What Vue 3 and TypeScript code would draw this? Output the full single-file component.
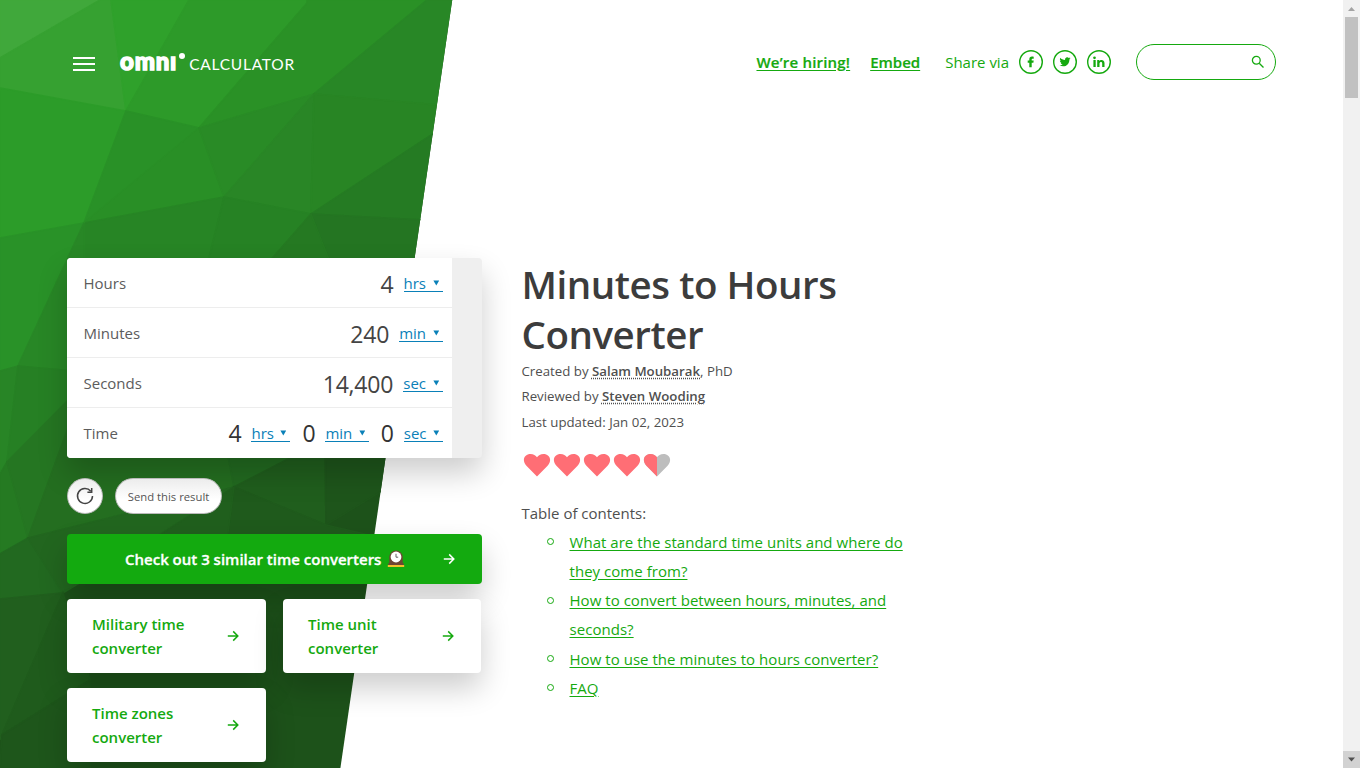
<script setup lang="ts">
interface Facet { points: string; fill: string }
interface Field { value: string; unit: string }
interface Row { label: string; fields: Field[] }

const facets: Facet[] = [
  { points: '0,0 100,0 0,58', fill: '#40a83b' },
  { points: '0,58 100,0 111,0 126,111 0,88', fill: '#36a131' },
  { points: '111,0 189,0 126,111', fill: '#2fa12b' },
  { points: '189,0 307,0 307,3 199,128 126,111', fill: '#2d9a29' },
  { points: '307,0 427,0 314,94 199,128 307,3', fill: '#2a9126' },
  { points: '427,0 460,0 460,107 314,94', fill: '#288726' },
  { points: '0,88 126,111 84,223 0,238', fill: '#2c9c29' },
  { points: '126,111 199,128 84,223', fill: '#299127' },
  { points: '199,128 224,197 84,223', fill: '#298f26' },
  { points: '199,128 314,94 224,197', fill: '#298b26' },
  { points: '314,94 311,214 224,197', fill: '#298626' },
  { points: '314,94 460,107 460,116 311,214', fill: '#288524' },
  { points: '460,116 460,222 311,214', fill: '#257b23' },
  { points: '84,223 224,197 209,258 209,300 84,300', fill: '#278525' },
  { points: '224,197 311,214 240,295 200,295', fill: '#268224' },
  { points: '311,214 460,222 460,300 345,300', fill: '#247522' },
  { points: '311,214 240,295 345,300', fill: '#257922' },
  { points: '0,238 84,223 18,366 0,371', fill: '#299228' },
  { points: '84,223 84,372 18,366', fill: '#288726' },
  { points: '0,371 18,366 7,462 0,474', fill: '#288526' },
  { points: '18,366 84,372 84,384 7,462', fill: '#268024' },
  { points: '0,474 7,462 28,538 0,554', fill: '#257a22' },
  { points: '7,462 84,384 28,538', fill: '#257622' },
  { points: '84,384 225,440 234,487 28,538', fill: '#246e20' },
  { points: '0,554 28,538 63,593 0,599', fill: '#226920' },
  { points: '28,538 234,487 160,534 63,593', fill: '#22661f' },
  { points: '0,599 63,593 2,735 0,740', fill: '#215f1e' },
  { points: '225,440 330,440 234,487', fill: '#226a20' },
  { points: '290,458 325,440 326,525 234,487', fill: '#205e1d' },
  { points: '325,440 400,440 400,480 326,525', fill: '#1e551b' },
  { points: '234,487 326,525 390,540 227,540', fill: '#1f5a1c' },
  { points: '234,487 227,540 152,540', fill: '#205f1d' },
  { points: '63,593 90,680 2,735', fill: '#1f5b1c' },
  { points: '2,735 90,680 90,768 0,768', fill: '#1e561b' },
]

const rows: Row[] = [
  { label: 'Hours', fields: [{ value: '4', unit: 'hrs' }] },
  { label: 'Minutes', fields: [{ value: '240', unit: 'min' }] },
  { label: 'Seconds', fields: [{ value: '14,400', unit: 'sec' }] },
  { label: 'Time', fields: [{ value: '4', unit: 'hrs' }, { value: '0', unit: 'min' }, { value: '0', unit: 'sec' }] },
]

const similar: string[][] = [['Military time', 'converter'], ['Time unit', 'converter'], ['Time zones', 'converter']]

const contents: string[][] = [
  ['What are the standard time units and where do', 'they come from?'],
  ['How to convert between hours, minutes, and', 'seconds?'],
  ['How to use the minutes to hours converter?'],
  ['FAQ'],
]
</script>

<template>
  <div class="window">
    <div class="page">
      <svg class="backdrop" width="460" height="768" viewBox="0 0 460 768">
        <defs>
          <clipPath id="slant"><polygon points="0,0 452.2,0 340.4,768 0,768" /></clipPath>
        </defs>
        <g clip-path="url(#slant)">
          <rect width="460" height="768" fill="#1d521a" />
          <polygon v-for="(f, i) in facets" :key="i" :points="f.points" :fill="f.fill" :stroke="f.fill" stroke-width="1.6" />
        </g>
      </svg>

      <header class="header">
        <div class="menu"><i></i><i></i><i></i></div>
        <div class="logo">
          <span class="omni">omnı</span><span class="dot"></span><span class="calculator">CALCULATOR</span>
        </div>
        <nav class="nav">
          <a class="strong hiring">We’re hiring!</a>
          <a class="strong embed">Embed</a>
          <span class="share">Share via</span>
          <svg class="social" width="24" height="24" viewBox="0 0 24 24">
            <circle cx="12" cy="12" r="11.3" />
            <path d="M10.300 17.300v-4.500H8.700v-2.200h1.600V9.400c0-1.900 1-2.800 2.700-2.800.800 0 1.300.1 1.700.1v2h-1c-.8 0-1 .4-1 .9v1h2l-.3 2.200h-1.700v4.500z" />
          </svg>
          <svg class="social" width="24" height="24" viewBox="0 0 24 24">
            <circle cx="12" cy="12" r="11.3" />
            <path d="M17.500 8.300c-.4.2-.8.3-1.200.3.4-.3.800-.7.900-1.200-.4.3-.9.4-1.400.5a2.300 2.300 0 0 0-3.800 2C10.100 9.900 8.400 9.100 7.200 7.700a2.300 2.300 0 0 0 .7 3c-.4 0-.7-.1-1-.3 0 1.100.7 2.100 1.800 2.300-.3.100-.6.100-1 0 .3 1 1.100 1.600 2.100 1.600-.9.700-2 1.100-3.300.9 4.800 3 10-.3 9.900-5.800.4-.3.800-.6 1.100-1.100z" />
          </svg>
          <svg class="social" width="24" height="24" viewBox="0 0 24 24">
            <circle cx="12" cy="12" r="11.3" />
            <path d="M6.400 10.100h2.300v7H6.400zM10.200 10.100h2.100v1c.9-1.700 5.200-1.700 5.200 1.900v4.100h-2.300v-3.600c0-2.100-2.700-1.800-2.700.1v3.500h-2.300z" />
            <circle class="solid" cx="7.500" cy="7.800" r="1.350" />
          </svg>
          <div class="search">
            <svg width="14" height="14" viewBox="0 0 14 14"><circle cx="5.300" cy="5.300" r="3.900" /><path d="M8.200 8.200l4.300 4.300" /></svg>
          </div>
        </nav>
      </header>

      <main class="main">
        <section class="left">
          <div class="calc">
            <div class="rows">
              <div v-for="row in rows" :key="row.label" class="row">
                <span class="label">{{ row.label }}</span>
                <div class="fields">
                  <div v-for="f in row.fields" :key="f.unit" class="field">
                    <span class="value">{{ f.value }}</span>
                    <a class="unit"><span class="unit-name">{{ f.unit }}</span><svg width="7" height="6" viewBox="0 0 7 6"><path d="M.4.4h5.800L3.300 5.600z" /></svg></a>
                  </div>
                </div>
              </div>
            </div>
          </div>

          <div class="actions">
            <button class="round">
              <svg width="20" height="20" viewBox="0 0 20 20"><path d="M15.800 5.200A7.500 7.500 0 1 0 17.500 10" /><path d="M16.700 2v4.300h-4.300" /></svg>
            </button>
            <button class="pill">Send this result</button>
          </div>

          <div class="check">
            <span class="check-text">Check out 3 similar time converters</span>
            <svg class="clock" width="18" height="18" viewBox="0 0 18 18">
              <path fill="#6d4534" d="M2.300 15V7.300a6.700 6.700 0 0 1 13.400 0V15z" />
              <path fill="#6d4534" d="M1.300 13.200h15.400v2H1.300z" />
              <path fill="#f5bf2b" d="M.8 15h16.400v2H.8z" />
              <circle cx="9" cy="7" r="5.400" fill="#fff" />
              <path d="M9 3.800v3.400h2.200" fill="none" stroke="#555" stroke-width=".9" />
            </svg>
            <svg class="arrow" width="12" height="12" viewBox="0 0 12 12"><path d="M.8 6h10M6.200 1.400L10.800 6l-4.600 4.600" /></svg>
          </div>

          <div class="similar">
            <div v-for="s in similar" :key="s[0]" class="tile">
              <div class="tile-text"><span v-for="t in s" :key="t">{{ t }}</span></div>
              <svg class="arrow" width="12" height="12" viewBox="0 0 12 12"><path d="M.8 6h10M6.200 1.400L10.800 6l-4.600 4.600" /></svg>
            </div>
          </div>
        </section>

        <article class="article">
          <h1><span>Minutes to Hours</span><span>Converter</span></h1>
          <p class="meta"><span>Created by </span><b>Salam Moubarak</b><span>, PhD</span></p>
          <p class="meta"><span>Reviewed by </span><b>Steven Wooding</b></p>
          <p class="meta"><span>Last updated: Jan 02, 2023</span></p>
          <div class="hearts">
            <svg v-for="n in 5" :key="n" width="30" height="30" viewBox="0 0 30 30">
              <defs><clipPath id="half"><rect width="15" height="30" /></clipPath></defs>
              <path :fill="n === 5 ? '#bdbdbd' : '#ff6e75'" d="M15 26.500L4.400 15.800C-1 9.500 3.200 4 8.400 4c3.200 0 5.200 1.500 6.600 3.300C16.400 5.500 18.400 4 21.600 4c5.200 0 9.400 5.500 4 11.800z" />
              <path v-if="n === 5" clip-path="url(#half)" fill="#ff6e75" d="M15 26.500L4.400 15.800C-1 9.500 3.200 4 8.400 4c3.200 0 5.200 1.500 6.600 3.300C16.400 5.500 18.400 4 21.600 4c5.200 0 9.400 5.500 4 11.800z" />
            </svg>
          </div>
          <p class="toc-title">Table of contents:</p>
          <ul class="toc">
            <li v-for="(c, i) in contents" :key="i">
              <span class="bullet"></span>
              <div><a v-for="l in c" :key="l">{{ l }}</a></div>
            </li>
          </ul>
        </article>
      </main>
    </div>
    <div class="scrollbar">
      <svg width="17" height="17" viewBox="0 0 17 17"><path fill="#a3a3a3" d="M5 11l3.500-4L12 11z" /></svg>
      <div class="thumb"></div>
      <svg class="down" width="17" height="17" viewBox="0 0 17 17"><path fill="#505050" d="M5 6.500h7l-3.500 4z" /></svg>
    </div>
  </div>
</template>

<style>
html, body { overflow: hidden; background: #fff; }
</style>

<style scoped>
* { box-sizing: border-box; }
.window { display: flex; width: 1360px; height: 768px; overflow: hidden; font-family: "Open Sans", "Noto Sans", sans-serif; font-size: 15px; color: #4f4f4f; }
.page { position: relative; width: 1343px; height: 768px; overflow: hidden; }
.backdrop { position: absolute; left: 0; top: 0; }
.header { position: relative; display: flex; align-items: center; height: 36px; margin-top: 44px; padding: 0 67px 0 73px; }
.menu { display: flex; flex-direction: column; gap: 4px; width: 22px; margin-top: 4px; }
.menu i { height: 2px; background: #fff; }
.logo { display: flex; align-items: baseline; color: #fff; margin: -2px 0 0 25px; height: 24px; }
.omni { font: 900 24px/24px Lato, sans-serif; letter-spacing: .8px; -webkit-text-stroke: 1.400px #fff; }
.dot { width: 6px; height: 6px; border-radius: 50%; background: #fff; align-self: flex-start; margin: 4px 0 0 1.500px; }
.calculator { font: 400 15.500px/24px Lato, sans-serif; letter-spacing: .75px; margin-left: 4.500px; }
.nav { display: flex; align-items: center; margin-left: auto; color: #15a90f; }
.strong { font-weight: 600; text-decoration: underline; text-underline-offset: 2px; -webkit-text-stroke: .2px #15a90f; }
.hiring { margin-right: 20px; letter-spacing: .2px; }
.embed { margin-right: 25px; }
.share { margin-right: 10px; }
.social { margin-right: 10px; fill: #15a90f; }
.social circle { fill: none; stroke: #15a90f; stroke-width: 1.400; }
.social .solid { fill: #15a90f; stroke: none; }
.search { display: flex; align-items: center; justify-content: flex-end; width: 140px; height: 36px; border: 1px solid #15a90f; border-radius: 18px; margin-left: 15px; padding-right: 10px; }
.search svg { fill: none; stroke: #15a90f; stroke-width: 1.300; }
.main { position: relative; display: flex; margin-top: 178px; padding-left: 67px; gap: 39.500px; }
.left { width: 415px; }
.calc { display: flex; width: 415px; height: 200px; background: #efefef; border-radius: 4px; box-shadow: 0 15px 30px rgba(0, 0, 0, .2); overflow: hidden; }
.rows { width: 385px; background: #fff; }
.row { display: flex; align-items: center; justify-content: space-between; height: 50px; padding: 0 9px 0 16.500px; border-bottom: 1px solid #ededed; }
.row:last-child { border-bottom-color: transparent; }
.label { color: #5c5c5c; }
.fields { display: flex; gap: 11px; }
.field { display: flex; align-items: center; gap: 10px; }
.value { font-size: 23px; line-height: 30px; letter-spacing: -.2px; color: #444; padding-top: 3px; }
.row:last-child .value { padding-top: 1px; color: #333; }
.unit { display: flex; align-items: center; color: #0a80b8; height: 17px; margin-top: 2px; border-bottom: 1px solid #0a80b8; gap: 7px; padding-right: 3px; }
.row:last-child .unit { margin-top: 1px; }
.row:last-child .unit { gap: 6.500px; }
.row:last-child .fields { gap: 12px; }
.unit svg { fill: #0a80b8; }
.actions { display: flex; gap: 12px; margin-top: 20px; }
.actions button { height: 36px; border: 1px solid #bbb; border-radius: 18px; padding: 0; font: 400 11.300px "Open Sans", sans-serif; color: #555; background: linear-gradient(#ececec, #fff 60%); }
.round { width: 36px; display: flex; align-items: center; justify-content: center; }
.round svg { fill: none; stroke: #444; stroke-width: 1.500; }
.pill { width: 107px; }
.check { display: flex; align-items: center; height: 50px; margin-top: 20px; padding-left: 58px; border-radius: 4px; background: #13aa0f; color: #fff; font-weight: 600; box-shadow: 0 15px 30px rgba(0, 0, 0, .2); }
.check-text { -webkit-text-stroke: .3px #fff; }
.clock { margin-left: 6px; }
.arrow { fill: none; stroke: #15a90f; stroke-width: 1.500; margin-left: auto; }
.check .arrow { stroke: #fff; margin-right: 27px; }
.similar { display: grid; grid-template-columns: 199px 198px; gap: 15px 17px; margin-top: 15px; }
.tile { display: flex; align-items: center; height: 74px; padding: 0 27px 0 25px; border-radius: 4px; background: #fff; color: #15a90f; font-weight: 600; line-height: 24px; box-shadow: 0 15px 30px rgba(0, 0, 0, .2); }
.tile-text { display: flex; flex-direction: column; }
.article { width: 420px; }
h1 { display: flex; flex-direction: column; margin: 1px 0 0; font-size: 38.500px; font-weight: 600; line-height: 50px; letter-spacing: -.45px; color: #3c3c3c; }
h1 span { white-space: nowrap; }
.meta { display: flex; position: relative; margin: 0; height: 25.500px; align-items: center; font-size: 13.250px; white-space: pre; padding-bottom: 2px; }
.meta b { font-weight: 600; text-decoration: underline dotted; text-underline-offset: 2px; }
.hearts { display: flex; margin-top: 14.500px; height: 30px; }
.toc-title { margin: 18.500px 0 0; line-height: 29px; }
.toc { margin: 0; padding: 0 0 0 25px; list-style: none; color: #15a90f; line-height: 29.300px; letter-spacing: .04px; }
.toc li { display: flex; gap: 16px; }
.bullet { width: 7px; height: 7px; margin-top: 10.500px; border: 1px solid #15a90f; border-radius: 50%; }
.toc a { display: block; width: max-content; text-decoration: underline; text-underline-offset: 2px; }
.scrollbar { display: flex; flex-direction: column; align-items: center; width: 17px; background: #f1f1f1; }
.thumb { width: 13px; height: 81px; background: #c1c1c1; }
.down { margin-top: auto; background: #d2d2d2; }
</style>
